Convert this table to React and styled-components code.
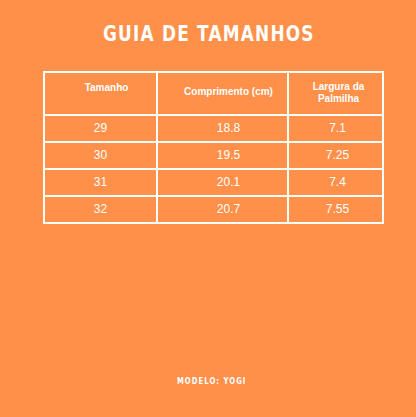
import React from 'react';
import styled, { createGlobalStyle } from 'styled-components';

const GlobalStyle = createGlobalStyle`
  html, body {
    margin: 0;
    padding: 0;
    background: #fe904a;
  }
`;

const Page = styled.div`
  width: 416px;
  height: 417px;
  background: #fe904a;
  display: flex;
  flex-direction: column;
  align-items: flex-start;
  box-sizing: border-box;
  padding-top: 23px;
  overflow: hidden;
`;

const Title = styled.h1`
  margin: 0 0 0 103px;
  font-family: "DejaVu Sans", sans-serif;
  font-weight: bold;
  font-size: 21px;
  line-height: 22px;
  letter-spacing: 1.5px;
  color: #ffffff;
  white-space: nowrap;
  transform: scaleX(0.805);
  transform-origin: left center;
`;

const Table = styled.div`
  margin: 26px 0 0 43px;
  display: grid;
  grid-template-columns: 111px 129px 93px;
  grid-template-rows: 41px 25px 25px 25px 25px;
  gap: 2px;
  padding: 2px;
  background: #ffffff;
`;

const Cell = styled.div`
  background: #fe904a;
  color: #ffffff;
  font-family: "Liberation Sans", Arial, sans-serif;
  font-size: ${(p) => (p.$head ? '10px' : '12px')};
  font-weight: ${(p) => (p.$head ? 'bold' : 'normal')};
  line-height: ${(p) => (p.$head ? '12px' : '25px')};
  text-align: center;
  padding-top: ${(p) => (p.$head ? p.$top : '0px')};
  padding-left: ${(p) => p.$shift || '0px'};
  box-sizing: border-box;
`;

const Footer = styled.div`
  margin: auto 0 31px 177px;
  font-family: "DejaVu Sans", sans-serif;
  font-weight: bold;
  font-size: 9px;
  letter-spacing: 1.4px;
  color: #ffffff;
  white-space: nowrap;
  transform: scaleX(0.76);
  transform-origin: left center;
`;

const heads = [
  { text: 'Tamanho', top: '9px', shift: '12px' },
  { text: 'Comprimento (cm)', top: '13px', shift: '12px' },
  { text: <>Largura da<br />Palmilha</>, top: '8px', shift: '6px' },
];

const rows = [
  ['29', '18.8', '7.1'],
  ['30', '19.5', '7.25'],
  ['31', '20.1', '7.4'],
  ['32', '20.7', '7.55'],
];

const shifts = ['0px', '12px', '4px'];

export default function App() {
  return (
    <Page>
      <GlobalStyle />
      <Title>GUIA DE TAMANHOS</Title>
      <Table>
        {heads.map((h, i) => (
          <Cell key={i} $head $top={h.top} $shift={h.shift}>{h.text}</Cell>
        ))}
        {rows.map((r, ri) =>
          r.map((v, ci) => (
            <Cell key={ri + '-' + ci} $shift={shifts[ci]}>{v}</Cell>
          ))
        )}
      </Table>
      <Footer>MODELO: YOGI</Footer>
    </Page>
  );
}
